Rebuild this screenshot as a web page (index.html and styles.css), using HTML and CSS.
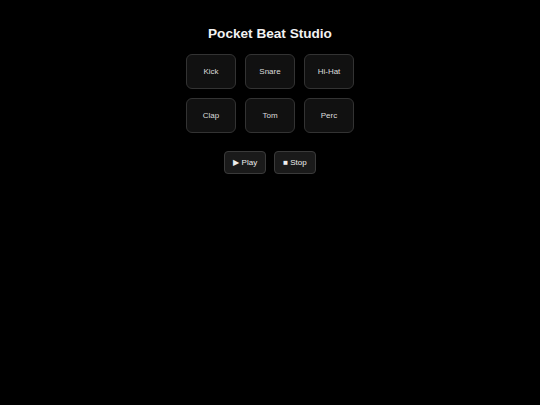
FILE: index.html
```html
<!DOCTYPE html>
<html>
<head>
<meta charset="utf-8">
<link rel="stylesheet" href="styles.css">
</head>
<body>
<main class="app">
  <h1 class="title">Pocket Beat Studio</h1>
  <div class="pads">
    <button class="pad">Kick</button>
    <button class="pad">Snare</button>
    <button class="pad">Hi-Hat</button>
    <button class="pad">Clap</button>
    <button class="pad">Tom</button>
    <button class="pad">Perc</button>
  </div>
  <div class="controls">
    <button class="ctl">▶ Play</button>
    <button class="ctl">■ Stop</button>
  </div>
</main>
</body>
</html>
```
FILE: styles.css
```css
html, body {
  margin: 0;
  padding: 0;
  background: #000;
  color: #eee;
  font-family: "Liberation Sans", Arial, sans-serif;
}
.app {
  display: flex;
  flex-direction: column;
  align-items: center;
  padding-top: 25px;
}
.title {
  margin: 0;
  font-size: 13.6px;
  font-weight: bold;
  line-height: 17px;
  color: #f2f2f2;
}
.pads {
  display: grid;
  grid-template-columns: repeat(3, 50px);
  grid-auto-rows: 35px;
  gap: 9px 9px;
  margin-top: 12px;
}
.pad {
  background: #111;
  border: 1px solid #333;
  border-radius: 6px;
  color: #ddd;
  font-family: "Liberation Sans", Arial, sans-serif;
  font-size: 8px;
  padding: 0;
}
.controls {
  display: flex;
  gap: 8px;
  margin-top: 18px;
}
.ctl {
  background: #1a1a1a;
  border: 1px solid #3a3a3a;
  border-radius: 4px;
  color: #eee;
  font-family: "Liberation Sans", Arial, sans-serif;
  font-size: 8px;
  height: 23px;
  padding: 0 8px;
}
```
